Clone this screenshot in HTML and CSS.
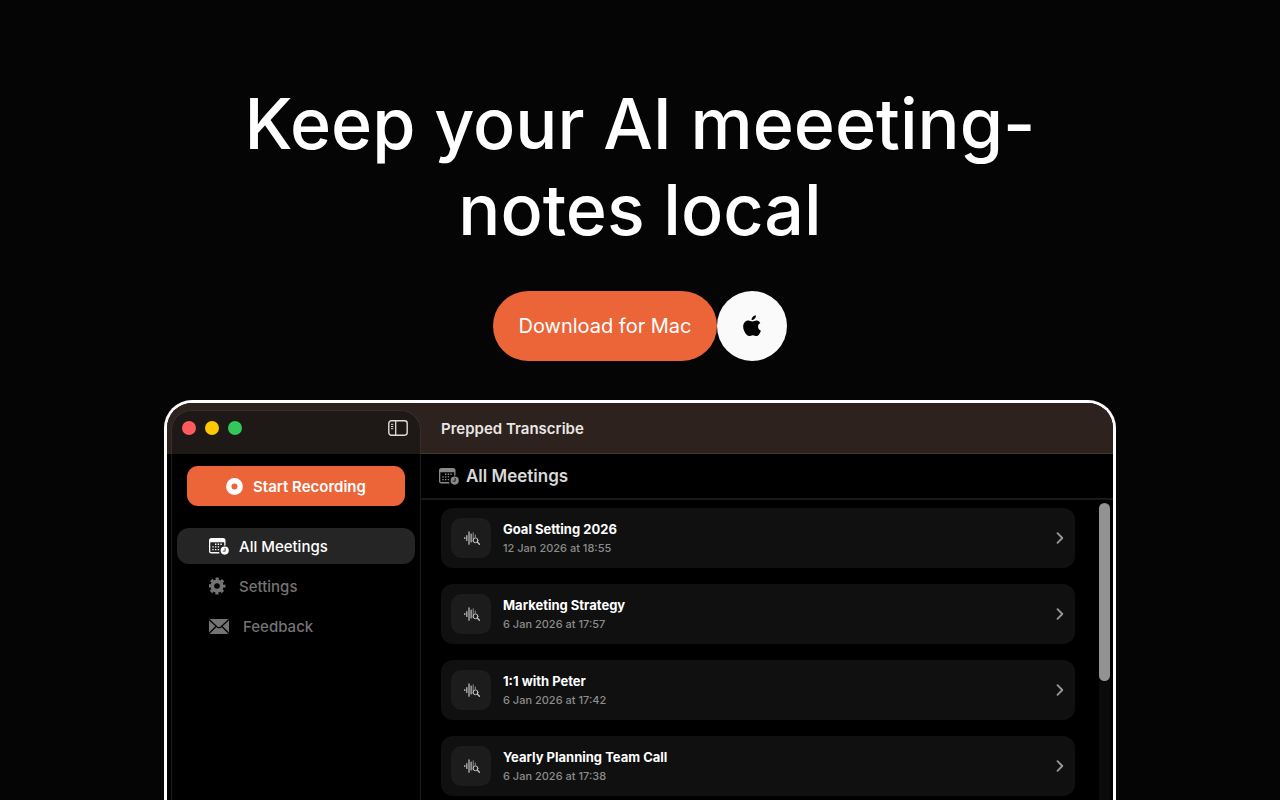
FILE: index.html
```html
<!DOCTYPE html>
<html lang="en">
<head>
<meta charset="utf-8">
<meta name="viewport" content="width=device-width, initial-scale=1">
<title>Prepped Transcribe</title>
<link rel="stylesheet" href="styles.css">
</head>
<body>
<svg class="defs" aria-hidden="true">
  <symbol id="calendar" viewBox="0 0 20 17">
    <path fill-rule="evenodd" fill="currentColor" d="M2.500 0h11.500A2.500 2.500 0 0 1 16.500 2.500V7.600a5 5 0 0 0-1.300.1V4.300H1.300v8.600c0 .8.400 1.200 1.200 1.200h7.600c.1.500.3.900.5 1.300H2.500A2.500 2.500 0 0 1 0 12.900V2.500A2.500 2.500 0 0 1 2.500 0Z"/>
    <path fill="currentColor" d="M6 5.500h1.400v1.400H6zM8.700 5.500h1.400v1.400H8.700zM11.400 5.500h1.400v1.400h-1.400zM3.300 8.200h1.400v1.400H3.300zM6 8.200h1.400v1.400H6zM8.700 8.200h1.400v1.400H8.700zM3.300 10.900h1.400v1.400H3.300zM6 10.900h1.400v1.400H6zM8.700 10.900h1.400v1.400H8.700z"/>
    <path fill-rule="evenodd" fill="currentColor" d="M15.700 8.500a4.100 4.100 0 1 1 0 8.200 4.100 4.100 0 0 1 0-8.200Zm0 1.500v2.700h-2v.8h2.800V10z"/>
  </symbol>
  <symbol id="wave" viewBox="0 0 16 14">
    <g fill="none" stroke="currentColor" stroke-linecap="round">
      <path d="M.8 6.500v1M2.800 4.500v5M5 .8v12.400M7.100 3v8" stroke-width="1.200"/>
      <path d="M9.200 1.800v9M11.300 4v2" opacity=".65"/>
      <circle cx="11.500" cy="9.300" r="2.400"/>
      <path d="m13.300 11 2.100 2.200" stroke-width="1.300"/>
    </g>
  </symbol>
  <symbol id="chevron" viewBox="0 0 8 12">
    <path d="m1.500 1.200 4.800 4.800-4.800 4.800" fill="none" stroke="currentColor" stroke-width="1.800" stroke-linecap="round" stroke-linejoin="round"/>
  </symbol>
</svg>

<main class="hero">
  <h1 class="hero-title">Keep your AI meeeting-notes local</h1>
  <div class="actions">
    <a class="download" href="#">Download for Mac</a>
    <a class="apple" href="#" aria-label="Download for Apple">
      <svg width="18" height="22" viewBox="0 0 18 22" fill="#000"><path d="M12.900.2c.2 1.300-.4 2.500-1.100 3.400-.8 1-2 1.600-3.200 1.500-.1-1.300.4-2.500 1.200-3.300C10.600.9 11.900.3 12.900.2ZM17.300 8c-1.500.9-2.300 2.100-2.200 3.800 0 1.900 1.100 3.200 2.800 3.900-.7 2.100-2.400 5.200-4.300 5.300-1.300.1-2-.8-3.700-.8-1.600 0-2.400.8-3.600.8C3.600 21 .3 16.200.2 11.800.1 8.100 2.500 5.500 5.300 5.500c1.600 0 3 .9 4 .9 1.100 0 2.700-1.100 4.600-.9 1.400.1 2.600.8 3.400 2.500Z"/></svg>
    </a>
  </div>
</main>

<section class="window" aria-label="Prepped Transcribe">
  <aside class="sidebar">
    <div class="sidebar-top">
      <div class="sidebar-head">
        <div class="lights"><span class="light red"></span><span class="light yellow"></span><span class="light green"></span></div>
        <button class="toggle" type="button" aria-label="Toggle sidebar">
          <svg width="20" height="16" viewBox="0 0 20 16" fill="none" stroke="currentColor"><rect x=".8" y=".8" width="18.400" height="14.400" rx="2.600" stroke-width="1.400"/><path d="M7.700 1v14" stroke-width="1.300"/><path d="M3 4.300h2.300M3 6.500h2.300M3 8.700h2.300"/></svg>
        </button>
      </div>
    </div>
    <div class="sidebar-body">
      <button class="record" type="button">
        <svg width="17" height="17" viewBox="0 0 17 17"><circle cx="8.500" cy="8.500" r="5.700" fill="none" stroke="#fff" stroke-width="5.400"/></svg>
        Start Recording
      </button>
      <nav class="nav">
        <a class="nav-item active" href="#"><svg width="20" height="17"><use href="#calendar"/></svg>All Meetings</a>
        <a class="nav-item" href="#">
          <svg width="20" height="18" viewBox="0 0 20 18"><g fill="none" stroke="currentColor"><circle cx="8" cy="9" r="4.700" stroke-width="3.800"/><circle cx="8" cy="9" r="7.200" stroke-width="2.600" stroke-dasharray="3.200 2.455" stroke-dashoffset="1.600"/></g></svg>Settings</a>
        <a class="nav-item mail" href="#">
          <svg width="20" height="15" viewBox="0 0 20 15"><rect width="20" height="15" rx="2" fill="currentColor"/><path d="m.5 1 7.700 6.900q1.800 1.500 3.600 0L19.500 1M.5 14l6.800-6.700M19.500 14l-6.800-6.700" fill="none" stroke="#000" stroke-width="1.300"/></svg>Feedback</a>
      </nav>
    </div>
  </aside>
  <div class="content">
    <header class="titlebar">Prepped Transcribe</header>
    <h2 class="section-title"><svg width="20" height="17"><use href="#calendar"/></svg>All Meetings</h2>
    <div class="scroll">
      <ul class="meetings">
        <li><a class="meeting" href="#"><span class="tile"><svg width="16" height="14"><use href="#wave"/></svg></span><span class="text"><strong>Goal Setting 2026</strong><span class="date">12 Jan 2026 at 18:55</span></span><svg class="chevron" width="8" height="12"><use href="#chevron"/></svg></a></li>
        <li><a class="meeting" href="#"><span class="tile"><svg width="16" height="14"><use href="#wave"/></svg></span><span class="text"><strong>Marketing Strategy</strong><span class="date">6 Jan 2026 at 17:57</span></span><svg class="chevron" width="8" height="12"><use href="#chevron"/></svg></a></li>
        <li><a class="meeting" href="#"><span class="tile"><svg width="16" height="14"><use href="#wave"/></svg></span><span class="text"><strong>1:1 with Peter</strong><span class="date">6 Jan 2026 at 17:42</span></span><svg class="chevron" width="8" height="12"><use href="#chevron"/></svg></a></li>
        <li><a class="meeting" href="#"><span class="tile"><svg width="16" height="14"><use href="#wave"/></svg></span><span class="text"><strong>Yearly Planning Team Call</strong><span class="date">6 Jan 2026 at 17:38</span></span><svg class="chevron" width="8" height="12"><use href="#chevron"/></svg></a></li>
      </ul>
      <div class="track"><div class="thumb"></div></div>
    </div>
  </div>
</section>
</body>
</html>
```
FILE: styles.css
```css
* { box-sizing: border-box; }

body {
  margin: 0;
  min-height: 100vh;
  display: flex;
  flex-direction: column;
  align-items: center;
  background: #050505;
  color: #fff;
  font-family: Inter, "Liberation Sans", sans-serif;
}

a { color: inherit; text-decoration: none; }
button { font: inherit; color: inherit; border: 0; padding: 0; background: none; cursor: pointer; }
svg { display: block; flex: none; }
.defs { position: absolute; width: 0; height: 0; }

.hero {
  width: 100%;
  padding: 81px 24px 39px;
  display: flex;
  flex-direction: column;
  align-items: center;
  gap: 38px;
}

.hero-title {
  margin: 0;
  max-width: 860px;
  font-size: 70px;
  font-weight: 500;
  line-height: 86px;
  text-align: center;
}

.actions { display: flex; }

.download {
  display: flex;
  align-items: center;
  height: 70px;
  padding: 0 25px;
  border-radius: 35px;
  background: #eb6539;
  font-size: 20px;
}

.apple {
  width: 70px;
  height: 70px;
  display: grid;
  place-items: center;
  border-radius: 50%;
  background: #fafafa;
}

.window {
  width: calc(100% - 48px);
  max-width: 952px;
  flex: 1;
  display: grid;
  grid-template-columns: 254px 1fr;
  border: 3px solid #fff;
  border-bottom: 0;
  border-radius: 28px 28px 0 0;
  background: #000;
  overflow: hidden;
}

.sidebar { display: flex; flex-direction: column; }

.sidebar-top {
  height: 51px;
  padding: 7px 0 0 4px;
  background: #2d221e;
}

.sidebar-head {
  height: 44px;
  padding: 0 12px 10px 10px;
  display: flex;
  align-items: center;
  justify-content: space-between;
  border: 1px solid #392e2b;
  border-bottom: 0;
  border-radius: 20px 20px 0 0;
  background: #1e1816;
}

.lights { display: flex; gap: 9px; }
.light { width: 14px; height: 14px; border-radius: 50%; }
.red { background: #ff5a60; }
.yellow { background: #fdc800; }
.green { background: #34c759; }
.toggle { color: #dedcdb; }

.sidebar-body {
  flex: 1;
  margin-left: 4px;
  padding: 12px 5px;
  border: solid #1b1b1b;
  border-width: 0 1px;
}

.record {
  display: flex;
  align-items: center;
  justify-content: center;
  gap: 10px;
  width: calc(100% - 20px);
  height: 40px;
  margin: 0 10px 22px;
  border-radius: 11px;
  background: #eb6539;
  font-size: 15px;
  font-weight: 600;
}

.nav { display: flex; flex-direction: column; gap: 4px; }

.nav-item {
  display: flex;
  align-items: center;
  gap: 10px;
  height: 36px;
  padding-left: 32px;
  border-radius: 12px;
  color: #737373;
  font-size: 15px;
  font-weight: 500;
}

.active { background: #252525; color: #fff; }
.mail { gap: 14px; }

.content { min-width: 0; display: flex; flex-direction: column; }

.titlebar {
  height: 51px;
  padding: 0 20px;
  display: flex;
  align-items: center;
  border-bottom: 1px solid #43362f;
  background: #2d221e;
  color: #e8e6e5;
  font-size: 15px;
  font-weight: 600;
}

.section-title {
  height: 46px;
  margin: 0;
  padding-left: 18px;
  display: flex;
  align-items: center;
  gap: 7px;
  border-bottom: 2px solid #191919;
  color: #d9d9d9;
  font-size: 17px;
  font-weight: 600;
}

.section-title svg { color: #8a8a8a; }

.scroll {
  flex: 1;
  display: flex;
  justify-content: space-between;
  gap: 24px;
  padding: 3px 3px 0 20px;
}

.meetings {
  flex: 1;
  margin: 0;
  padding: 5px 0 4px;
  list-style: none;
  display: flex;
  flex-direction: column;
  gap: 16px;
}

.meeting {
  height: 60px;
  padding: 0 11px 0 10px;
  display: flex;
  align-items: center;
  gap: 12px;
  border-radius: 12px;
  background: #101010;
}

.tile {
  width: 40px;
  height: 40px;
  padding-left: 2px;
  display: grid;
  place-items: center;
  border-radius: 10px;
  background: #1c1c1c;
  color: #c4c4c4;
}

.text { flex: 1; display: flex; flex-direction: column; gap: 1px; }
.text strong { font-size: 13px; font-weight: 700; line-height: 18px; }
.date { color: #8c8c8c; font-size: 11px; font-weight: 500; line-height: 18px; }
.chevron { color: #9a9a9a; }

.track { width: 11px; background: #0b0b0b; border-radius: 6px 6px 0 0; }
.thumb { height: 178px; border-radius: 6px; background: #929292; }
```
